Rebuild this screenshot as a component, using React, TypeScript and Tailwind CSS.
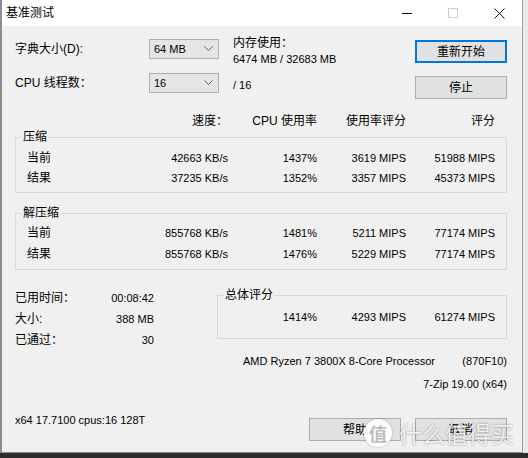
import React from 'react'

const cjk = 'text-[12px]'
const num = 'text-[11px]'

function Combo({ value }: { value: string }) {
  return (
    <div className="w-[70px] h-[20px] bg-[#e5e5e5] border border-[#adadad] flex items-center justify-between pl-[4px] pr-[5px]">
      <span className={`${num} leading-[18px]`}>{value}</span>
      <svg width="9" height="6" viewBox="0 0 9 6" className="text-[#606060]">
        <polyline points="0.5,0.5 4.5,4.5 8.5,0.5" fill="none" stroke="currentColor" strokeWidth="1" />
      </svg>
    </div>
  )
}

function Button({ label, primary }: { label: string; primary?: boolean }) {
  return (
    <div
      className={`h-[23px] flex items-center justify-center ${cjk} ${
        primary ? 'w-[92px] border-2 border-[#0078d7] bg-[#e1e1e1]' : 'w-[92px] border border-[#adadad] bg-[#e1e1e1]'
      }`}
    >
      {label}
    </div>
  )
}

function Group({ title, children, className }: { title: string; children: React.ReactNode; className?: string }) {
  return (
    <fieldset className={`border border-[#d9d9d9] ${className ?? ''}`}>
      <legend className={`${cjk} leading-[16px] ml-[6px] px-[1px]`}>{title}</legend>
      {children}
    </fieldset>
  )
}

type Row = { label: string; speed: string; cpu: string; usage: string; rating: string }

function StatRow({ r, lh }: { r: Row; lh: string }) {
  return (
    <div className={`flex ${lh}`}>
      <div className="w-[212px] flex justify-between pl-[11px]">
        <span className={cjk}>{r.label}</span>
        <span className={num}>{r.speed}</span>
      </div>
      <div className={`w-[89px] text-right ${num}`}>{r.cpu}</div>
      <div className={`w-[89px] text-right ${num}`}>{r.usage}</div>
      <div className={`w-[89px] text-right ${num}`}>{r.rating}</div>
    </div>
  )
}

const compress: Row[] = [
  { label: '当前', speed: '42663 KB/s', cpu: '1437%', usage: '3619 MIPS', rating: '51988 MIPS' },
  { label: '结果', speed: '37235 KB/s', cpu: '1352%', usage: '3357 MIPS', rating: '45373 MIPS' },
]

const decompress: Row[] = [
  { label: '当前', speed: '855768 KB/s', cpu: '1481%', usage: '5211 MIPS', rating: '77174 MIPS' },
  { label: '结果', speed: '855768 KB/s', cpu: '1476%', usage: '5229 MIPS', rating: '77174 MIPS' },
]

export default function App() {
  return (
    <div
      className="w-[528px] h-[458px] bg-[#e9e9e9] relative overflow-hidden text-black flex flex-col"
      style={{ fontFamily: '"Liberation Sans", "Noto Sans CJK SC", sans-serif' }}
    >
      <div className="w-[523px] h-[453px] bg-[#f0f0f0] border-l-2 border-l-[#8c8c8c] border-r border-r-[#a0a0a0] border-b border-b-[#8c8c8c] flex flex-col">
        {/* title bar */}
        <div className="h-[26px] bg-white flex items-center">
          <span className={`${cjk} pl-[4px] leading-[16px]`}>基准测试</span>
          <div className="ml-auto flex h-full">
            <div className="w-[46px] flex items-center justify-center">
              <div className="w-[10px] h-px bg-black" />
            </div>
            <div className="w-[46px] flex items-center justify-center">
              <div className="w-[10px] h-[10px] border border-[#cccccc]" />
            </div>
            <div className="w-[46px] flex items-center justify-center">
              <svg width="11" height="11" viewBox="0 0 11 11">
                <path d="M0.5 0.5 L10.5 10.5 M10.5 0.5 L0.5 10.5" stroke="#111" strokeWidth="1" />
              </svg>
            </div>
          </div>
        </div>

        <div className="flex-1 pl-[13px] pr-[15px] pt-[13px] flex flex-col">
          {/* top controls */}
          <div className="flex items-start h-[34px]">
            <div className={`w-[134px] ${cjk} leading-[20px]`}>字典大小(D):</div>
            <Combo value="64 MB" />
            <div className="ml-[14px] -mt-[4px] flex flex-col">
              <span className={`${cjk} leading-[16px]`}>内存使用：</span>
              <span className={`${num} leading-[16px]`}>6474 MB / 32683 MB</span>
            </div>
            <div className="ml-auto mt-[1px]">
              <Button label="重新开始" primary />
            </div>
          </div>
          <div className="flex items-start h-[40px]">
            <div className={`w-[134px] ${cjk} leading-[20px]`}>CPU 线程数：</div>
            <Combo value="16" />
            <div className={`ml-[14px] mt-[2px] ${num} leading-[20px]`}>/ 16</div>
            <div className="ml-auto mt-[3px]">
              <Button label="停止" />
            </div>
          </div>

          {/* header */}
          <div className={`flex leading-[16px] ${cjk}`}>
            <div className="w-[213px] text-right">速度：</div>
            <div className="w-[89px] text-right">CPU 使用率</div>
            <div className="w-[89px] text-right">使用率评分</div>
            <div className="w-[89px] text-right">评分</div>
          </div>

          <Group title="压缩" className="pb-[4px]">
            <div className="mt-[3px]">
              {compress.map((r) => (
                <StatRow key={r.label} r={r} lh="leading-[20px]" />
              ))}
            </div>
          </Group>

          <Group title="解压缩" className="mt-[12px] pb-[4px]">
            <div className="mt-[2px]">
              {decompress.map((r) => (
                <StatRow key={r.label} r={r} lh="leading-[21px]" />
              ))}
            </div>
          </Group>

          {/* summary */}
          <div className="flex items-start mt-[18px]">
            <div className="w-[139px] flex flex-col">
              {[
                ['已用时间：', '00:08:42'],
                ['大小:', '388 MB'],
                ['已通过：', '30'],
              ].map(([k, v]) => (
                <div key={k} className="flex justify-between leading-[21px]">
                  <span className={cjk}>{k}</span>
                  <span className={num}>{v}</span>
                </div>
              ))}
            </div>
            <Group title="总体评分" className="ml-[63px] -mt-[1px] flex-1 pb-[11px]">
              <div className={`flex mt-[4px] leading-[20px] ${num}`}>
                <div className="w-[99px] text-right">1414%</div>
                <div className="w-[89px] text-right">4293 MIPS</div>
                <div className="w-[89px] text-right">61274 MIPS</div>
              </div>
            </Group>
          </div>

          <div className={`flex mt-0 leading-[20px] ${num}`}>
            <span className="ml-[228px]">AMD Ryzen 7 3800X 8-Core Processor</span>
            <span className="ml-auto">(870F10)</span>
          </div>
          <div className={`flex mt-[3px] leading-[20px] ${num} justify-end`}>7-Zip 19.00 (x64)</div>

          <div className="flex items-start mt-[16px]">
            <span className={`${num} leading-[20px]`}>x64 17.7100 cpus:16 128T</span>
            <div className="ml-auto mt-[8px] flex gap-[14px]">
              <Button label="帮助" />
              <Button label="取消" />
            </div>
          </div>
        </div>
      </div>
      <div className="flex-1 bg-[#2e2e2e]" />

      {/* watermark */}
      <div className="absolute left-[364px] top-[419px] w-[28px] h-[28px] rounded-full bg-white/90 shadow-[0_0_2px_rgba(0,0,0,0.35)] flex items-center justify-center">
        <span className="text-[18px] leading-none text-[#bdbdbd] font-bold" style={{ fontFamily: '"Noto Sans CJK SC", sans-serif' }}>
          值
        </span>
      </div>
      <div
        className="absolute left-[399px] top-[418px] text-[23px] leading-[30px] text-white/85 tracking-[0px] [text-shadow:0_0_2px_rgba(0,0,0,0.45)]"
        style={{ fontFamily: '"Noto Sans CJK SC", sans-serif' }}
      >
        什么值得买
      </div>
    </div>
  )
}
